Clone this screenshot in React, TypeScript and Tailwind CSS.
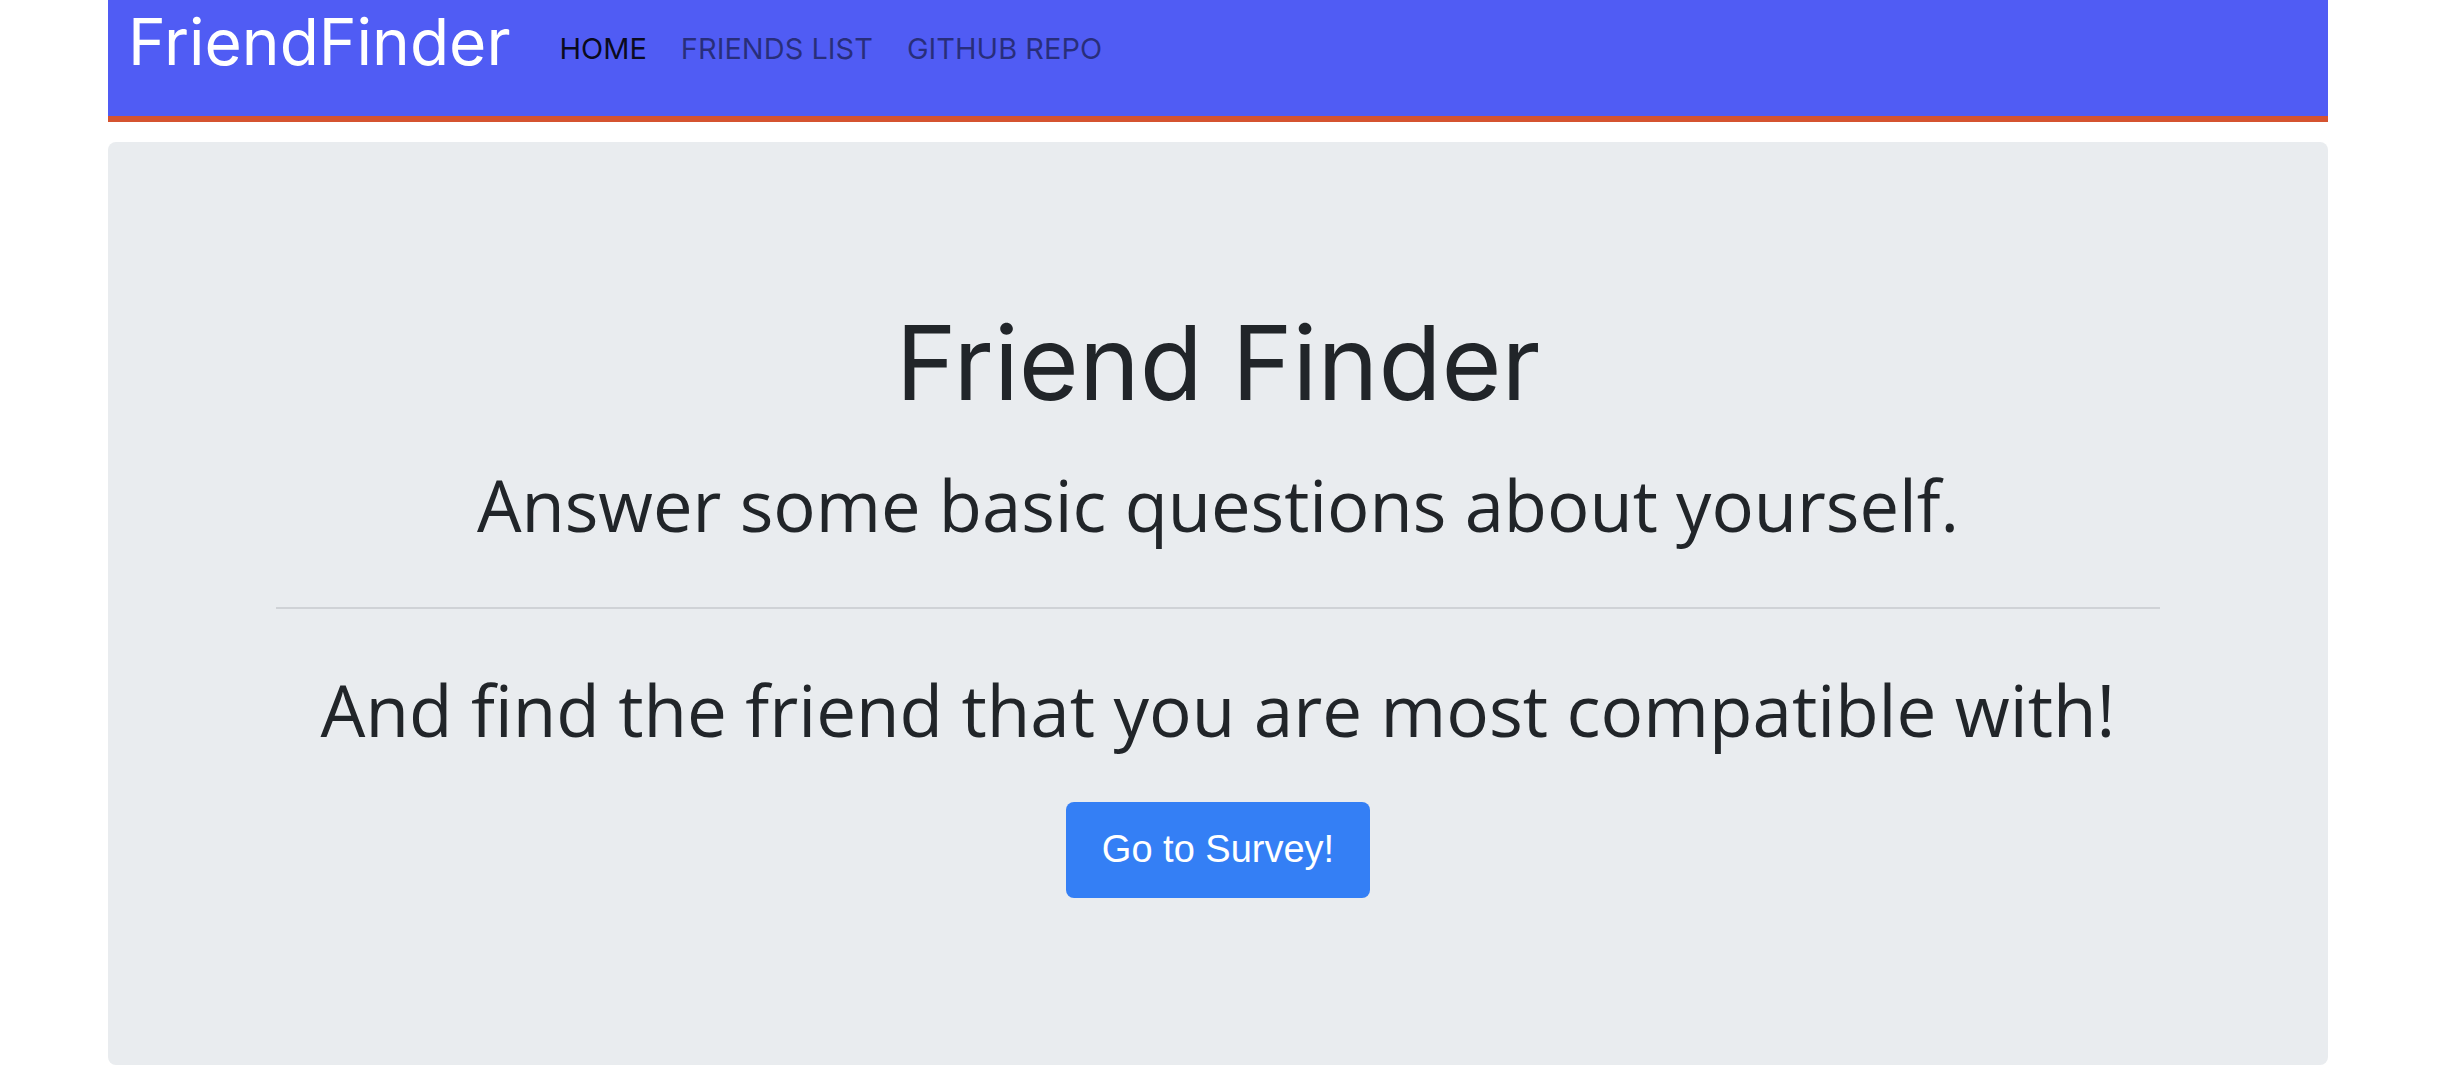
export default function App() {
  return (
    <div className="min-h-screen bg-white">
      <div className="ml-[108px] w-[2220px]">
        {/* navbar */}
        <nav className="flex h-[122px] items-start border-b-[6px] border-[#d55330] bg-[#505cf4] pl-[20px]">
          <a href="#" className="mt-[4px] font-['Inter',sans-serif] text-[64px] leading-[76px] text-white">
            FriendFinder
          </a>
          <ul className="ml-[49px] mt-[31px] flex gap-[34px] font-['Inter',sans-serif] text-[29px] leading-[36px]">
            <li><a href="#" className="text-black/90">HOME</a></li>
            <li><a href="#" className="text-black/50">FRIENDS LIST</a></li>
            <li><a href="#" className="text-black/50">GITHUB REPO</a></li>
          </ul>
        </nav>

        {/* jumbotron */}
        <div className="mt-[20px] h-[923px] rounded-[8px] bg-[#e9ecef] px-[168px] pt-[169px] text-center text-[#212529]">
          <h1 className="font-['Inter',sans-serif] text-[103px] leading-none">Friend Finder</h1>
          <h2 className="mt-[56px] font-['Open_Sans',sans-serif] text-[70.5px] leading-none">
            Answer some basic questions about yourself.
          </h2>
          <hr className="mt-[66px] h-[2px] border-0 bg-[#cfd2d6]" />
          <p className="mt-[65px] font-['Open_Sans',sans-serif] text-[71px] leading-none">
            And find the friend that you are most compatible with!
          </p>
          <a
            href="#"
            className="mx-auto mt-[57px] flex h-[96px] w-[304px] items-center justify-center rounded-[8px] bg-[#347ff5] font-['Liberation_Sans',sans-serif] text-[38px] text-white"
          >
            Go to Survey!
          </a>
        </div>
      </div>
    </div>
  );
}
